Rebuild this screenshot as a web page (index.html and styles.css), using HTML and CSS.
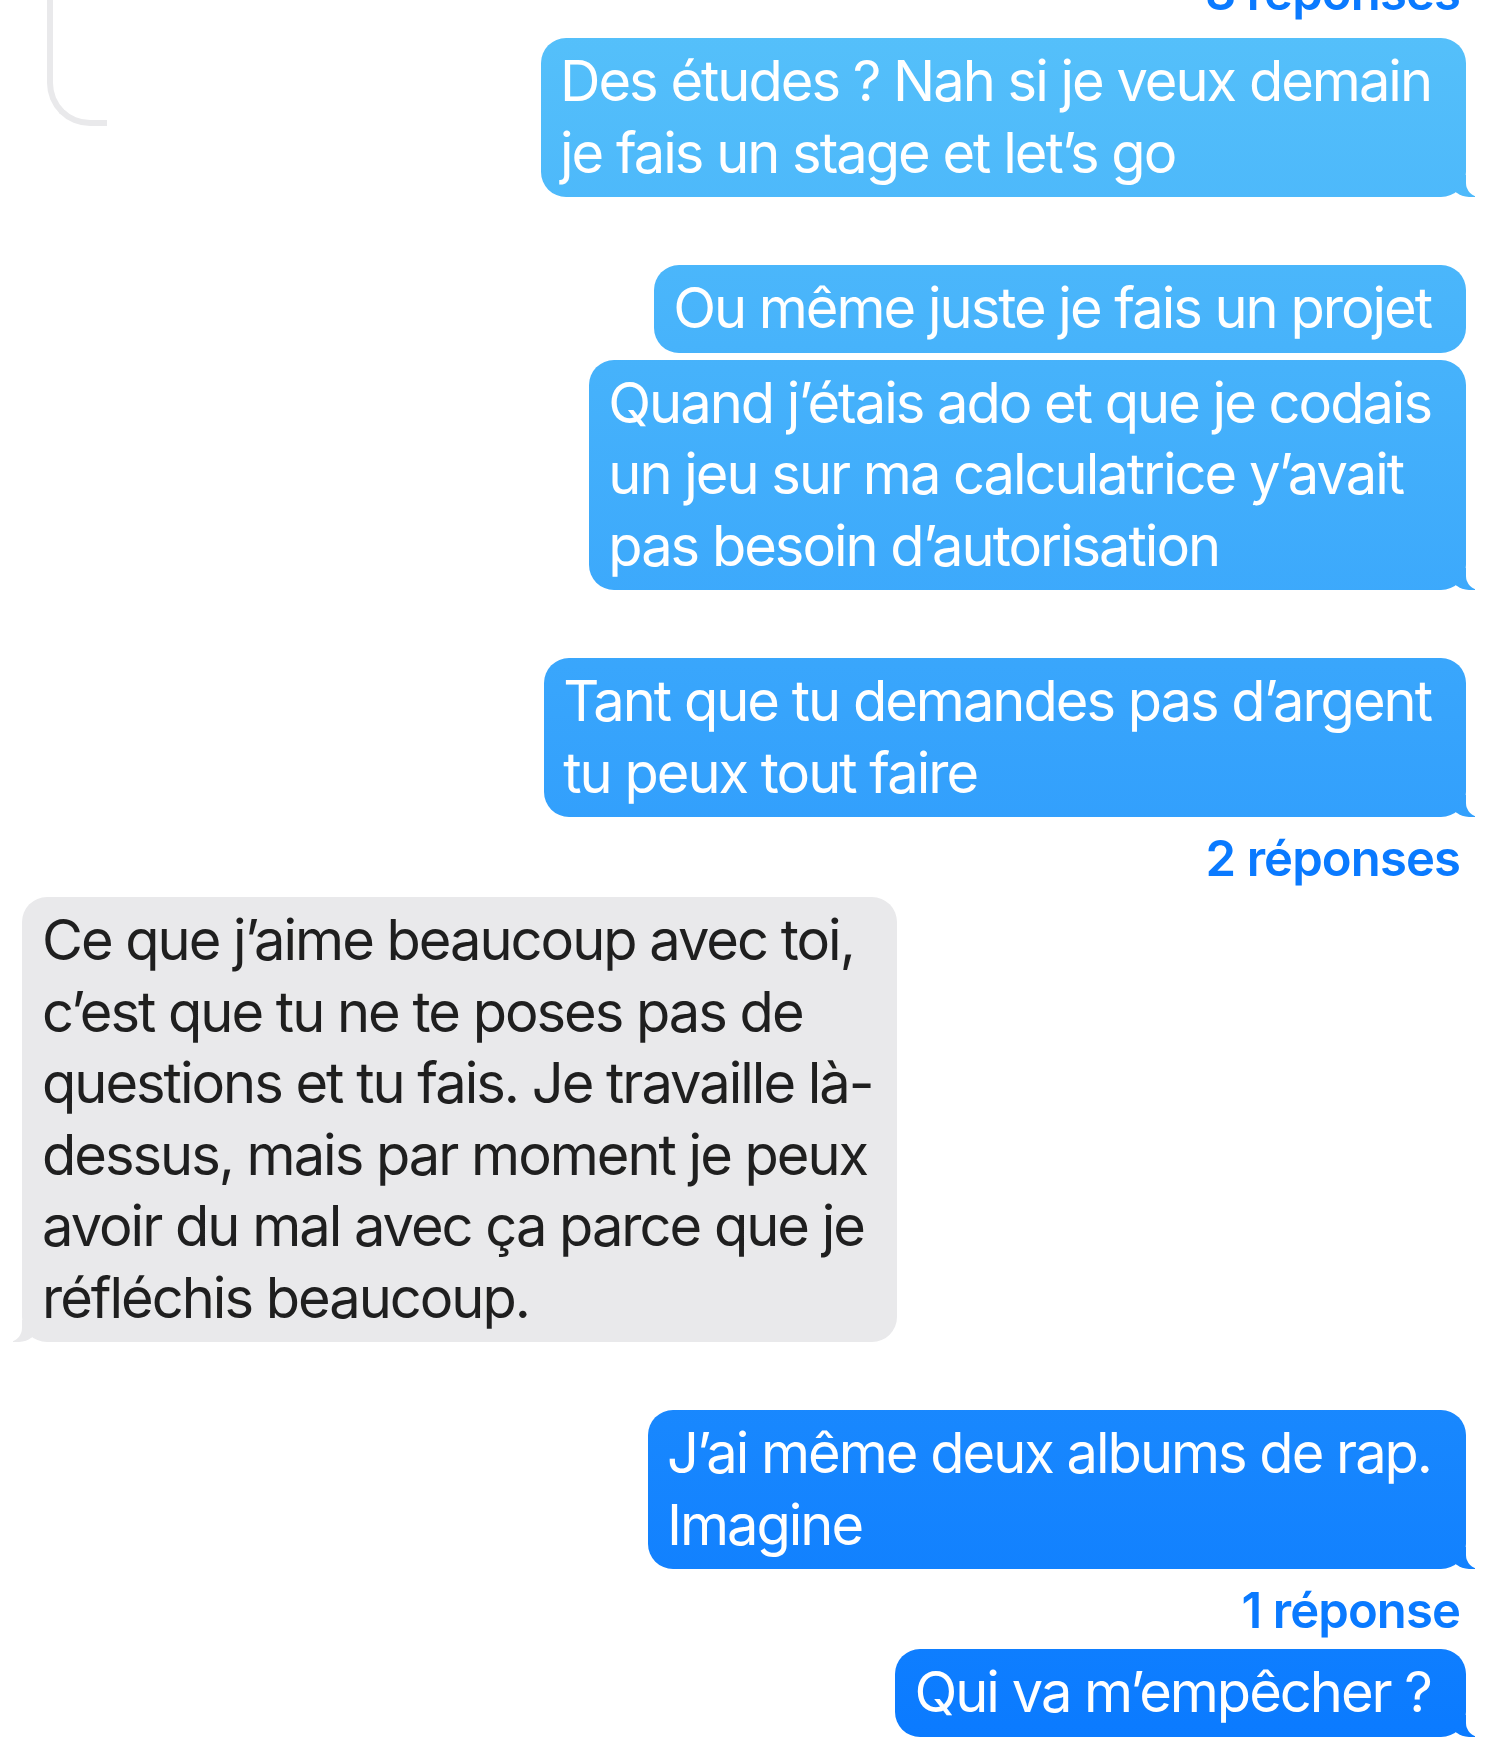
FILE: index.html
```html
<!DOCTYPE html>
<html lang="fr">
<head>
<meta charset="utf-8">
<title>Messages</title>
<link rel="stylesheet" href="styles.css">
</head>
<body>
<main class="thread">
  <div class="row">
    <div class="connector"></div>
    <div class="stack">
      <div class="replies replies-top">3 réponses</div>
      <div class="bubble sent tail after-label">Des études ? Nah si je veux demain<br>je fais un stage et let’s go</div>
    </div>
  </div>
  <div class="bubble sent group">Ou même juste je fais un projet</div>
  <div class="bubble sent tail next">Quand j’étais ado et que je codais<br>un jeu sur ma calculatrice y’avait<br>pas besoin d’autorisation</div>
  <div class="bubble sent tail group">Tant que tu demandes pas d’argent<br>tu peux tout faire</div>
  <div class="replies">2 réponses</div>
  <div class="bubble received tail after-label">Ce que j’aime beaucoup avec toi,<br>c’est que tu ne te poses pas de<br>questions et tu fais. Je travaille là-<br>dessus, mais par moment je peux<br>avoir du mal avec ça parce que je<br>réfléchis beaucoup.</div>
  <div class="bubble sent tail group">J’ai même deux albums de rap.<br>Imagine</div>
  <div class="replies">1 réponse</div>
  <div class="bubble sent tail after-label">Qui va m’empêcher ?</div>
</main>
</body>
</html>
```
FILE: styles.css
```css
html, body {
  margin: 0;
  padding: 0;
  background: #ffffff;
}

body {
  width: 1496px;
  height: 1748px;
  overflow: hidden;
  font-family: Inter, "Noto Sans", "Liberation Sans", sans-serif;
}

.thread {
  display: flex;
  flex-direction: column;
  align-items: flex-end;
  padding: 0 30px 0 22px;
}

.row {
  display: flex;
  align-self: stretch;
  align-items: flex-start;
}

.connector {
  margin-left: 25px;
  width: 54px;
  height: 120px;
  border-left: 6px solid #e9e9eb;
  border-bottom: 6px solid #e9e9eb;
  border-bottom-left-radius: 43px;
}

.stack {
  flex: 1;
  display: flex;
  flex-direction: column;
  align-items: flex-end;
}

.bubble {
  position: relative;
  font-size: 56px;
  line-height: 71.5px;
  letter-spacing: -2px;
  padding: 8px 35px 8px 19px;
  border-radius: 25px;
  color: #ffffff;
  white-space: nowrap;
}

.sent {
  background: linear-gradient(180deg, #56c1fa 0%, #0a7aff 100%) fixed;
}

.received {
  align-self: flex-start;
  background: #e9e9eb;
  color: #1f1f1f;
  padding: 8px 24px 8px 20px;
}

.group {
  margin-top: 68px;
}

.next {
  margin-top: 7px;
}

.after-label {
  margin-top: 8px;
}

.replies {
  margin-top: 12px;
  padding-right: 6px;
  font-size: 49px;
  line-height: 60px;
  font-weight: 600;
  letter-spacing: -0.9px;
  color: #0a7aff;
  white-space: nowrap;
}

.replies-top {
  margin-top: -37px;
}

.replies-top + .after-label {
  margin-top: 15px;
}

.tail::before,
.tail::after {
  content: "";
  position: absolute;
  bottom: 0;
  height: 22px;
}

.sent.tail::before {
  right: -9px;
  width: 24px;
  background: inherit;
  border-bottom-left-radius: 18px 15px;
}

.sent.tail::after {
  right: -24px;
  width: 24px;
  background: #ffffff;
  border-bottom-left-radius: 14px;
}

.received.tail::before {
  left: -9px;
  width: 24px;
  background: inherit;
  border-bottom-right-radius: 18px 15px;
}

.received.tail::after {
  left: -24px;
  width: 24px;
  background: #ffffff;
  border-bottom-right-radius: 14px;
}
```
